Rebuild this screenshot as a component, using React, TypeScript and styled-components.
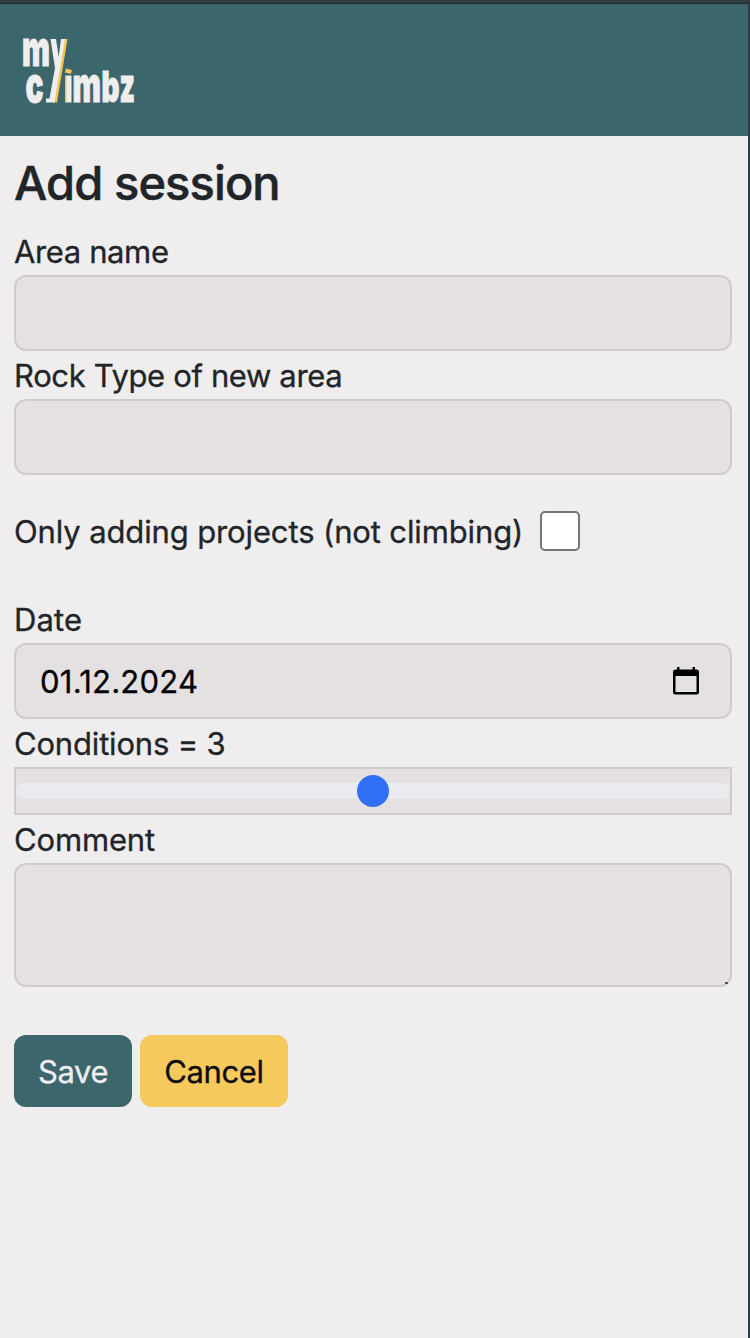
import React, { useState } from "react";
import styled, { createGlobalStyle } from "styled-components";

const GlobalStyle = createGlobalStyle`
  *, *::before, *::after { box-sizing: border-box; }
  body {
    margin: 0;
    background: #efedee;
    color: #212529;
    font-family: Inter, "Liberation Sans", sans-serif;
    font-size: 31px;
    line-height: 48px;
    -webkit-text-stroke: 0.3px currentColor;
  }
`;

const Frame = styled.div`
  width: 750px;
  height: 1338px;
  overflow: hidden;
  background: #efedee;
  border-top: 3px solid #2f3b3f;
  border-right: 2px solid #2c3e41;
`;

const Header = styled.header`
  height: 133px;
  border-top: 1px solid #20292e;
  background: #3b666c;
`;

const LogoSvg = styled.svg`
  display: block;
  font-family: Inter, "Liberation Sans", sans-serif;
  font-weight: 900;
`;

const Form = styled.form`
  display: flex;
  flex-direction: column;
  padding: 18px 16px 0 14px;
`;

const Title = styled.h1`
  margin: 0 0 15px;
  font-size: 47px;
  font-weight: 500;
  line-height: 58px;
  letter-spacing: -0.9px;
  -webkit-text-stroke: 0.5px currentColor;
`;

const Label = styled.label<{ $spacing?: number }>`
  display: block;
  height: 48px;
  padding-top: 1px;
  white-space: nowrap;
  letter-spacing: ${({ $spacing = 0.1 }) => $spacing}px;
`;

const Field = styled.div`
  display: flex;
  flex-direction: column;
`;

const controlSurface = `
  border: 2px solid #d1cbce;
  background: #e5e1e3;
  color: #000;
  font: inherit;
  outline: none;
`;

const Input = styled.input`
  ${controlSurface}
  width: 100%;
  height: 76px;
  padding: 12px 24px;
  border-radius: 12px;
`;

const DateBox = styled.div`
  ${controlSurface}
  display: flex;
  align-items: center;
  justify-content: space-between;
  height: 76px;
  padding: 0 31px 0 24px;
  border-radius: 12px;
`;

const DateValue = styled.span`
  padding-top: 1px;
  letter-spacing: 0.25px;
`;

const CheckRow = styled.div`
  display: flex;
  align-items: center;
  gap: 18px;
  height: 48px;
  margin: 32px 0 40px;
`;

const CheckLabel = styled(Label)`
  width: 508px;
`;

const Checkbox = styled.input`
  appearance: none;
  width: 40px;
  height: 40px;
  margin: 0;
  border: 2px solid #767676;
  border-radius: 5px;
  background: #fff;
`;

const Range = styled.input`
  appearance: none;
  display: block;
  width: 100%;
  height: 48px;
  margin: 0;
  padding: 0;
  border: 2px solid #d1cbce;
  background: #e5e1e3;

  &::-webkit-slider-runnable-track {
    height: 16px;
    border-radius: 16px;
    background: #e9ebef;
  }

  &::-webkit-slider-thumb {
    appearance: none;
    width: 32px;
    height: 32px;
    margin-top: -8px;
    border-radius: 50%;
    background: #316ff6;
  }
`;

const TextArea = styled.textarea`
  ${controlSurface}
  display: block;
  width: 100%;
  height: 124px;
  padding: 12px 24px;
  border-radius: 12px;
  resize: none;
`;

const TextAreaWrap = styled.div`
  position: relative;
`;

const Grip = styled.span`
  position: absolute;
  right: 4px;
  bottom: 3px;
  width: 3px;
  height: 2px;
  background: #55555a;
`;

const Actions = styled.div`
  display: flex;
  gap: 8px;
  margin-top: 48px;
`;

const Button = styled.button<{ $tone: "primary" | "warning" }>`
  width: ${({ $tone }) => ($tone === "primary" ? 118 : 148)}px;
  height: 72px;
  padding: 1px 0 0;
  border: 0;
  border-radius: 12px;
  font: inherit;
  letter-spacing: -0.4px;
  background: ${({ $tone }) => ($tone === "primary" ? "#3b666c" : "#f6c95c")};
  color: ${({ $tone }) => ($tone === "primary" ? "#efedee" : "#0b0b0b")};
`;

function Glyph({ x, y, w, size, children }: { x: number; y: number; w: number; size: number; children: string }) {
  return (
    <text x={x} y={y} fontSize={size} textLength={w} lengthAdjust="spacingAndGlyphs" fill="#efedee" stroke="#efedee" strokeWidth="0.9">
      {children}
    </text>
  );
}

function Logo() {
  return (
    <LogoSvg width="160" height="132" viewBox="0 4 160 132" role="img" aria-label="my climbz">
      <Glyph x={22} y={66} w={28} size={49}>m</Glyph>
      <path d="M64.500 39h3L57 102.500h-4z" fill="#f5c452" />
      <path d="M50.500 39h5.500l2.700 18L61 39h4L54.500 102.500H46v-4h3.500L55 68z" fill="#efedee" />
      <Glyph x={25.500} y={102} w={18} size={48}>c</Glyph>
      <path d="M66 68.500l6 1.500-1.200 4-6-1.500z" fill="#f5c452" />
      <path d="M65 75.500h2v27h-2z" fill="#f5c452" />
      <path d="M66.500 75.500h5v27h-5z" fill="#efedee" />
      <Glyph x={72.500} y={102} w={28.500} size={48}>m</Glyph>
      <Glyph x={101.500} y={102} w={18} size={43}>b</Glyph>
      <Glyph x={119.500} y={102} w={15.500} size={47}>z</Glyph>
    </LogoSvg>
  );
}

function CalendarIcon() {
  return (
    <svg width="26" height="28" viewBox="0 0 26 28" aria-hidden="true">
      <path
        fillRule="evenodd"
        d="M4 0h2.500v2.500h13V0H22v2.500h1.500Q26 2.500 26 5v20Q26 27.500 23.500 27.500h-21Q0 27.500 0 25V5Q0 2.500 2.500 2.500H4zM2.500 9v16h21V9z"
        fill="#000"
      />
    </svg>
  );
}

export default function App() {
  const [conditions, setConditions] = useState(3);
  return (
    <>
      <GlobalStyle />
      <Frame>
        <Header>
          <Logo />
        </Header>
        <Form onSubmit={(e) => e.preventDefault()}>
          <Title>Add session</Title>
          <Field>
            <Label htmlFor="area" $spacing={-0.38}>Area name</Label>
            <Input id="area" />
          </Field>
          <Field>
            <Label htmlFor="rock" $spacing={-0.36}>Rock Type of new area</Label>
            <Input id="rock" />
          </Field>
          <CheckRow>
            <CheckLabel htmlFor="projects" $spacing={-0.13}>Only adding projects (not climbing)</CheckLabel>
            <Checkbox id="projects" type="checkbox" />
          </CheckRow>
          <Field>
            <Label>Date</Label>
            <DateBox>
              <DateValue>01.12.2024</DateValue>
              <CalendarIcon />
            </DateBox>
          </Field>
          <Field>
            <Label htmlFor="conditions" $spacing={-0.18}>Conditions = {conditions}</Label>
            <Range
              id="conditions"
              type="range"
              min={1}
              max={5}
              value={conditions}
              onChange={(e) => setConditions(Number(e.target.value))}
            />
          </Field>
          <Field>
            <Label htmlFor="comment" $spacing={-0.15}>Comment</Label>
            <TextAreaWrap>
              <TextArea id="comment" />
              <Grip />
            </TextAreaWrap>
          </Field>
          <Actions>
            <Button $tone="primary" type="submit">Save</Button>
            <Button $tone="warning" type="button">Cancel</Button>
          </Actions>
        </Form>
      </Frame>
    </>
  );
}
